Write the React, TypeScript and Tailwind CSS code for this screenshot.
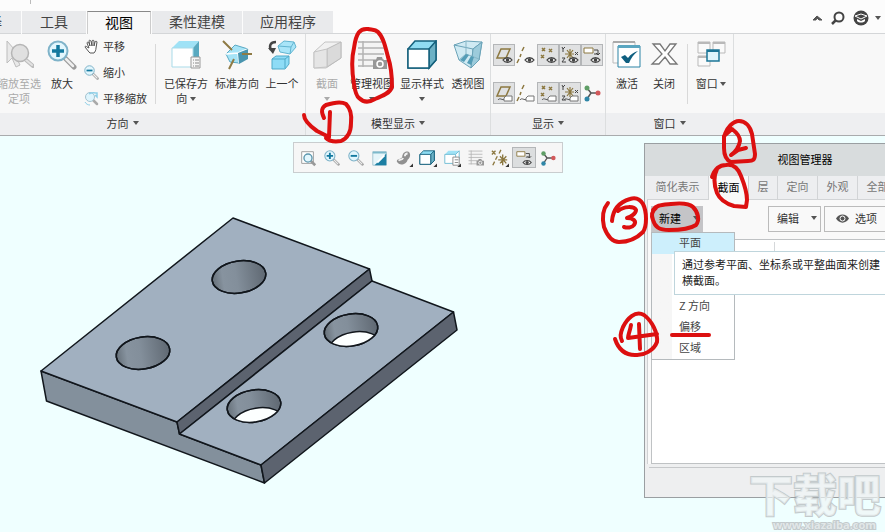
import type { ReactNode } from 'react';

const BLUE = '#1c7fa3';
const GOLD = '#8c7840';

function Svg({ size, box = size, children, className = '' }: { size: number; box?: number; children: ReactNode; className?: string }) {
  return (
    <svg width={size} height={size} viewBox={`0 0 ${box} ${box}`} fill="none" className={`shrink-0 ${className}`} aria-hidden="true">
      {children}
    </svg>
  );
}

function Caret({ className = 'text-[#555]' }: { className?: string }) {
  return (
    <svg width="6" height="4" viewBox="0 0 6 4" className={`inline-block shrink-0 ${className}`} aria-hidden="true">
      <path d="M0 0h6L3 4z" fill="currentColor" />
    </svg>
  );
}

/* ---------- large ribbon icons ---------- */

function ZoomSelectedIcon() {
  return (
    <Svg size={30}>
      <path d="M3 1v22l5-5 4 9 4-2-4-8h5z" fill="#e9e9e9" stroke="#bdbdbd" />
      <path d="M22 20l7 6" stroke="#bcbcbc" strokeWidth="4" strokeLinecap="round" />
      <path d="M22 20l6 5" stroke="#e2e2e2" strokeWidth="2" strokeLinecap="round" />
      <circle cx="16" cy="13" r="8.500" fill="#e0e0e0" stroke="#b5b5b5" strokeWidth="1.500" />
    </Svg>
  );
}

function ZoomIcon({ size, plus }: { size: number; plus: boolean }) {
  return (
    <Svg size={size} box={30}>
      <path d="M18 18l9 9" stroke="#9a9a9a" strokeWidth="5" strokeLinecap="round" />
      <path d="M19 19l7 7" stroke="#eee" strokeWidth="2.500" strokeLinecap="round" />
      <circle cx="11" cy="11" r="9.500" fill="#e2f6fd" stroke="#7fb3c9" strokeWidth="2" />
      <path d={plus ? 'M11 5v12M5 11h12' : 'M5 11h12'} stroke="#13799f" strokeWidth="3.500" />
    </Svg>
  );
}

function HandIcon() {
  return (
    <Svg size={15} box={15}>
      <path
        d="M5 13L1 8c0-1 1-1 2 0L5 9 3 4c0-1 1-1 2 0l1 3-1-5c0-1 1-1 2 0l1 5V2c0-1 2-1 2 0v5l1-4c0-1 2-1 2 0l-1 6c0 2-1 4-2 5H6z"
        fill="#fff"
        stroke="#555"
      />
    </Svg>
  );
}

function PanZoomIcon() {
  return (
    <Svg size={15} box={15}>
      <path d="M9 9l4 4" stroke="#aaa" strokeWidth="2.500" strokeLinecap="round" />
      <circle cx="6" cy="6" r="4.500" fill="#dff5fd" stroke="#a4c3d0" />
      <path d="M5 3c3-2 6-1 8-1v4l-2-2" stroke="#8ed0e8" strokeWidth="1.500" />
      <path d="M1 11c1 2 3 3 5 3" stroke="#8ed0e8" />
    </Svg>
  );
}

function SavedViewIcon() {
  return (
    <Svg size={30}>
      <path d="M1 8l7-7h20l-6 7z" fill="#9fe2f6" />
      <path d="M22 8l6-7v20l-6 6z" fill="#58a9c0" />
      <path d="M1 8h21v19H1z" fill="#fff" stroke="#a9dbe9" />
      <path d="M20 17h9v11h-9z" fill="#f6f6f6" stroke="#999" />
      <path d="M24 20h4M24 23h4M24 26h4M22 20h1M22 23h1M22 26h1" stroke="#888" />
    </Svg>
  );
}

function StandardViewIcon() {
  return (
    <Svg size={30}>
      <path d="M4 14l9-9 13 4-9 14-9-1z" fill="#a6e4f7" stroke="#5aa9c4" />
      <path d="M4 14l12-1 10-4M16 13l1 10" stroke="#fff" strokeWidth="1.500" />
      <path d="M16 13l10-4v10l-9 5z" fill="#4a95af" />
      <path d="M1 1l9 9M20 14h10M12 19l-5 10" stroke="#8f7b45" strokeWidth="2" />
    </Svg>
  );
}

function PreviousViewIcon() {
  return (
    <Svg size={30}>
      <path d="M11 6l6-5 10 1 2 5-6 7-10-2z" fill="#a9e5f8" stroke="#62b5d1" />
      <path d="M11 6l13 1 3-5M24 7l-1 7" stroke="#62b5d1" />
      <path d="M5 19l4-3h13v8l-4 5H5z" fill="#8edcf6" stroke="#4fa9c8" />
      <path d="M5 19h13l4-3M18 19v9" stroke="#4fa9c8" />
      <path d="M9 2C3 2 2 6 4 10" stroke="#444" strokeWidth="2.500" />
      <path d="M1 8h8l-3 6z" fill="#444" />
    </Svg>
  );
}

function SectionIcon() {
  return (
    <Svg size={30}>
      <path d="M2 12L13 2h16v16L14 28H2z" fill="#f1f1f1" stroke="#c4c4c4" />
      <path d="M15 9l14-7v16l-14 9z" fill="#dadada" stroke="#bbb" />
      <path d="M2 12l13-3v18L2 28z" stroke="#c4c4c4" fill="#e5e5e5" />
    </Svg>
  );
}

function ManageViewsIcon({ size = 30 }: { size?: number }) {
  return (
    <Svg size={size} box={30}>
      <path d="M1 1h26v26H1z" fill="#f4f4f4" />
      <path d="M1 2h26M1 8h26M1 14h26M1 20h26M1 26h17M6 1v26" stroke="#b3b3b3" strokeWidth="1.500" />
      <path d="M16 20h3l1-3h5l1 3h4v9H16z" fill="#979797" />
      <circle cx="23" cy="24" r="3" fill="#999" stroke="#fff" strokeWidth="1.500" />
    </Svg>
  );
}

function ShadedCubeIcon({ size = 30 }: { size?: number }) {
  return (
    <Svg size={size} box={30}>
      <path d="M1 9l7-8h21v19l-7 8H1z" fill="#8fdcf2" stroke="#14607c" strokeWidth="1.500" />
      <path d="M22 9l7-8v19l-7 8z" fill="#6cb1c5" stroke="#14607c" strokeWidth="1.500" />
      <path d="M1 9h21v19H1z" fill="#fff" stroke="#14607c" strokeWidth="1.500" />
    </Svg>
  );
}

function PerspectiveIcon() {
  return (
    <Svg size={30}>
      <path d="M1 5l12-4 16 1-3 18-8 8L6 20z" fill="#cfeaf3" stroke="#6ba3b8" />
      <path d="M1 5l19 4 9-7M20 9l-2 19" stroke="#6ba3b8" />
      <path d="M20 9l9-7-3 18-8 8z" fill="#9ccbdb" stroke="#6ba3b8" />
      <path d="M13 1v13l-7 6M13 14l13 5" stroke="#87b6c7" />
      <path d="M7 20l6-6 3 1-5 7zM14 23l4-7 3 1-3 8z" fill="#549db7" />
    </Svg>
  );
}

function ActivateIcon() {
  return (
    <Svg size={30}>
      <path d="M1 2h22v21H1z" fill="#fafafa" stroke="#bbb" />
      <path d="M1 1h22v2H1z" fill="#aaa" />
      <path d="M6 6h22v21H6z" fill="#fff" stroke="#2b83a5" />
      <path d="M6 5h22v3H6z" fill="#5aa6c0" />
      <path d="M9 17l4-2 3 3c3-4 6-6 10-7-4 3-7 7-9 12h-3z" fill="#0f5f80" />
    </Svg>
  );
}

function CloseIcon() {
  return (
    <Svg size={30}>
      <path d="M4 4h7l5 7 5-7h6l-8 10 9 10h-7l-5-7-6 7H3l10-10z" fill="#fff" stroke="#777" strokeWidth="1.300" />
    </Svg>
  );
}

function WindowsIcon() {
  return (
    <Svg size={30}>
      <g fill="#fafafa" stroke="#b9b9b9">
        <path d="M2 2h12v11H2zM17 2h12v11H17zM2 16h12v10H2z" />
        <path d="M2 3h12M17 3h12M2 17h12" strokeWidth="2" />
      </g>
      <path d="M11 10h12v11H11z" fill="#dff5fc" stroke="#1c7596" strokeWidth="1.500" />
      <path d="M11 11h12" stroke="#1c7596" strokeWidth="2" />
    </Svg>
  );
}

/* ---------- datum display icons, drawn on a 20px grid ---------- */

function Eye() {
  return (
    <g>
      <path d="M9 15c2-3 7-3 9 0-2 3-7 3-9 0z" fill="#fff" stroke="#444" strokeWidth="1.300" />
      <circle cx="13.500" cy="15" r="1.800" fill="#444" />
    </g>
  );
}

function Tag() {
  return (
    <g>
      <path d="M4 17c2-3 4 1 7-1" stroke="#555" />
      <path d="M10 15l2-2h6v5h-8z" fill="#fff" stroke="#777" />
    </g>
  );
}

function Molecule() {
  return (
    <g>
      <path d="M5 5l4 5 7 0M9 10l-4 6" stroke="#555" strokeWidth="1.500" />
      <circle cx="5" cy="5" r="2.500" fill="#5f9e66" />
      <circle cx="16" cy="10" r="2.500" fill="#d2595b" />
      <circle cx="5" cy="16" r="2.500" fill="#2f86a7" />
    </g>
  );
}

const planeShape = <path d="M7 4h9l-4 9H3z" stroke={GOLD} strokeWidth="1.500" />;
const axisShape = <path d="M8 2L6 6M5 9l-1 3M3 14l-2 4" stroke={GOLD} strokeWidth="1.500" />;
const pointShape = <path d="M4 3l3 3M7 3L4 6M11 4l3 3M14 4l-3 3M3 10l3 3M6 10l-3 3" stroke={GOLD} strokeWidth="1.500" />;
const csysShape = (
  <g>
    <path d="M10 4v10M5 9h9M7 5l6 8M13 5l-6 8" stroke={GOLD} strokeWidth="1.200" />
    <path d="M2 2l1 2 2-2M3 4v3M15 7l3 3M18 7l-3 3M2 13h3l-3 4h4" stroke="#444" />
  </g>
);
const noteShape = (
  <g>
    <path d="M2 3h9v5H2z" fill="#fff" stroke={GOLD} />
    <path d="M12 5h4v5M14 8l2 2 2-2M12 9h4" stroke="#444" />
  </g>
);

const datumRows = [
  [
    { label: '平面显示', on: true, art: <>{planeShape}<Eye /></> },
    { label: '轴显示', on: false, art: <>{axisShape}<Eye /></> },
    { label: '点显示', on: true, art: <>{pointShape}<Eye /></> },
    { label: '坐标系显示', on: true, art: <>{csysShape}<Eye /></> },
    { label: '注释显示', on: true, art: <>{noteShape}<Eye /></> },
  ],
  [
    { label: '平面标记显示', on: true, art: <>{planeShape}<Tag /></> },
    { label: '轴标记显示', on: false, art: <>{axisShape}<Tag /></> },
    { label: '点标记显示', on: true, art: <>{pointShape}<Tag /></> },
    { label: '坐标系标记显示', on: true, art: <>{csysShape}<Tag /></> },
    { label: '旋转中心', on: false, art: <Molecule /> },
  ],
];

const corner = <path d="M20 16v4h-4z" fill="#333" />;

const viewTools = [
  {
    label: '重新调整',
    art: (
      <>
        <path d="M3 3h13v13H3z" fill="#fff" stroke="#999" />
        <path d="M13 13l5 5" stroke="#999" strokeWidth="3" />
        <circle cx="10" cy="10" r="4.500" fill="#e2f6fd" stroke="#5c96ad" strokeWidth="1.500" />
      </>
    ),
  },
  { label: '放大', icon: <ZoomIcon size={16} plus /> },
  { label: '缩小', icon: <ZoomIcon size={16} plus={false} /> },
  {
    label: '重画',
    art: (
      <>
        <path d="M2 3h15v15H2z" fill="#e5f5fa" stroke="#9fc3cf" />
        <path d="M17 5v13H4z" fill={BLUE} />
        <path d="M2 3h15v2H2z" fill="#7db9cb" />
        <path d="M15 7l-8 8" stroke="#fff" strokeWidth="2" />
      </>
    ),
  },
  {
    label: '渲染选项',
    art: (
      <>
        <path d="M2 14c0-4 5-2 6-5 0-4 3-7 7-6 3 2 2 7-1 9-1 5-9 8-12 2z" fill="#909090" />
        <path d="M4 13c2-2 4 0 5-3M11 8c0-2 1-3 3-3" stroke="#f2f2f2" strokeWidth="2" />
        {corner}
      </>
    ),
  },
  {
    label: '显示样式',
    art: (
      <>
        <path d="M1 6l4-4h12v11l-4 4H1z" fill="#8fdcf2" stroke="#14607c" />
        <path d="M13 6l4-4v11l-4 4z" fill="#6cb1c5" stroke="#14607c" />
        <path d="M1 6h12v11H1z" fill="#fff" stroke="#14607c" />
        {corner}
      </>
    ),
  },
  {
    label: '已保存方向',
    art: (
      <>
        <path d="M2 6l4-4h12l-4 4z" fill="#9fe2f6" />
        <path d="M2 6h12v10H2zM14 6l4-4v10" fill="#fff" stroke="#6bbad2" />
        <path d="M11 9h7v9h-7z" fill="#fff" stroke="#888" />
        <path d="M13 12h4M13 15h4" stroke="#888" />
        {corner}
      </>
    ),
  },
  { label: '视图管理器', icon: <ManageViewsIcon size={16} /> },
  {
    label: '基准显示过滤器',
    art: (
      <>
        <path d="M1 2l4 4M5 2L1 6M11 1L9 5M7 8l-2 4M4 14l-2 4M13 6v12M8 12h10M10 8l7 8M17 8l-7 8" stroke={GOLD} strokeWidth="1.500" />
        {corner}
      </>
    ),
  },
  { label: '注释显示', on: true, art: <>{noteShape}<Eye /></> },
  { label: '旋转中心', art: <Molecule /> },
];

/* ---------- ribbon ---------- */

const tabs = [
  { label: '工具', width: 'w-16' },
  { label: '视图', width: 'w-16', active: true },
  { label: '柔性建模', width: 'w-[90px]' },
  { label: '应用程序', width: 'w-[90px]' },
];

type BigButtonProps = { icon: ReactNode; label: ReactNode; width: string; caret?: boolean; disabled?: boolean };

function BigButton({ icon, label, width, caret, disabled }: BigButtonProps) {
  return (
    <button
      type="button"
      disabled={disabled}
      className={`flex shrink-0 flex-col items-center whitespace-nowrap pt-[2px] leading-[15px] ${width} ${disabled ? 'text-[#aaa]' : 'text-[#333]'}`}
    >
      {icon}
      <span className="mt-[6px]">{label}</span>
      {caret && <Caret className={disabled ? 'mt-[6px] text-[#aaa]' : 'mt-[6px] text-[#555]'} />}
    </button>
  );
}

function SmallButton({ icon, label }: { icon: ReactNode; label: string }) {
  return (
    <button type="button" className="flex items-center gap-1 whitespace-nowrap">
      {icon}
      {label}
    </button>
  );
}

function Group({ title, width, titleClass = '', children }: { title: string; width: string; titleClass?: string; children: ReactNode }) {
  return (
    <section className={`flex shrink-0 flex-col border-r border-[#dcdedf] ${width}`}>
      <div className="flex h-[79px] items-start pt-1">{children}</div>
      <button type="button" className={`flex h-[22px] items-center justify-center gap-1 bg-[#eeeff1] pb-[2px] text-[#333] ${titleClass}`}>
        {title}
        <Caret />
      </button>
    </section>
  );
}

function Divider() {
  return <div className="mx-[3px] mt-[6px] h-[60px] w-px shrink-0 bg-[#d9d9d9]" />;
}

function Ribbon() {
  return (
    <header className="border-b border-[#a9abad] bg-[#fcfcfc]">
      <div className="h-[10px] pl-[30px]">
        <div className="h-1 w-px bg-[#bbb]" />
      </div>
      <div className="flex">
        <nav className="flex shrink-0 items-end gap-px text-sm">
          <button type="button" className="-ml-3 flex h-[23px] w-[33px] items-center border-b border-[#d4d6d8] bg-[#e9eaec] pb-[2px] leading-none text-[#444]">
            择
          </button>
          {tabs.map((tab) => (
            <button
              key={tab.label}
              type="button"
              className={`flex h-[23px] items-center justify-center pb-[2px] leading-none ${tab.width} ${
                tab.active ? 'border border-b-0 border-t-[#888] border-x-[#ccc] bg-[#f8f8f8] text-black' : 'border-b border-[#d4d6d8] bg-[#e9eaec] text-[#444]'
              }`}
            >
              {tab.label}
            </button>
          ))}
        </nav>
        <div className="flex flex-1 items-center justify-end gap-2 border-b border-[#d4d6d8] pr-1 pb-[7px]">
          <button type="button" aria-label="最小化功能区">
            <svg width="11" height="7" viewBox="0 0 11 7" aria-hidden="true">
              <path d="M1 5l4-4 5 4H7L5 3 4 5z" fill="#555" stroke="#555" />
            </svg>
          </button>
          <button type="button" aria-label="搜索">
            <Svg size={14}>
              <circle cx="8" cy="6" r="4.500" stroke="#444" strokeWidth="2" />
              <path d="M5 9l-4 4" stroke="#444" strokeWidth="2.500" />
            </Svg>
          </button>
          <button type="button" aria-label="学习中心" className="flex items-center gap-[6px]">
            <Svg size={16}>
              <circle cx="8" cy="8" r="7.500" fill="#444" />
              <path d="M2 6l6-2 6 2-6 3z" fill="#444" stroke="#fff" />
              <path d="M4 9v2c2 2 6 2 8 0V9l-4 2z" fill="#fff" />
            </Svg>
            <Caret />
          </button>
        </div>
      </div>

      <div className="flex bg-[#f8f8f8] text-[11px]">
        <Group title="方向" width="w-[306px]" titleClass="pr-[60px]">
          <div className="-ml-1 flex">
            <BigButton icon={<ZoomSelectedIcon />} label={<>缩放至选<br />定项</>} width="w-[46px]" disabled />
            <BigButton icon={<ZoomIcon size={30} plus />} label="放大" width="w-10" />
            <div className="ml-[2px] flex w-[68px] flex-col gap-[10px] text-[#333] leading-4">
              <SmallButton icon={<HandIcon />} label="平移" />
              <SmallButton icon={<ZoomIcon size={15} plus={false} />} label="缩小" />
              <SmallButton icon={<PanZoomIcon />} label="平移缩放" />
            </div>
            <Divider />
            <BigButton
              icon={<SavedViewIcon />}
              label={<>已保存方<br />向 <Caret className="mb-[2px] text-[#555]" /></>}
              width="w-[54px]"
            />
            <BigButton icon={<StandardViewIcon />} label="标准方向" width="w-12" />
            <BigButton icon={<PreviousViewIcon />} label="上一个" width="w-[42px]" />
          </div>
        </Group>
        <Group title="模型显示" width="w-[185px]">
          <BigButton icon={<SectionIcon />} label="截面" width="w-[42px]" caret disabled />
          <BigButton icon={<ManageViewsIcon />} label="管理视图" width="w-12" caret />
          <BigButton icon={<ShadedCubeIcon />} label="显示样式" width="w-[52px]" caret />
          <BigButton icon={<PerspectiveIcon />} label="透视图" width="w-10" />
        </Group>
        <Group title="显示" width="w-[115px]">
          <div className="mt-[6px] ml-[2px] flex flex-col gap-4">
            {datumRows.map((row, i) => (
              <div key={i} className="flex">
                {row.map((item) => (
                  <button
                    key={item.label}
                    type="button"
                    aria-label={item.label}
                    aria-pressed={item.on}
                    className={`flex size-[22px] items-center justify-center border ${item.on ? 'border-[#b4b6b8] bg-[#e0e1e2]' : 'border-transparent'}`}
                  >
                    <Svg size={20}>{item.art}</Svg>
                  </button>
                ))}
              </div>
            ))}
          </div>
        </Group>
        <Group title="窗口" width="w-32">
          <BigButton icon={<ActivateIcon />} label="激活" width="w-[42px]" />
          <BigButton icon={<CloseIcon />} label="关闭" width="w-8" />
          <div className="w-1" />
          <Divider />
          <BigButton icon={<WindowsIcon />} label={<>窗口 <Caret className="mb-[2px] text-[#555]" /></>} width="w-10" />
        </Group>
        <div className="flex flex-1 flex-col">
          <div className="h-[79px]" />
          <div className="h-[22px] bg-[#eeeff1]" />
        </div>
      </div>
    </header>
  );
}

/* ---------- graphics area ---------- */

function ViewToolbar() {
  return (
    <div role="toolbar" aria-label="图形工具栏" className="flex w-fit items-center border border-[#c9cdcf] bg-[#f6f6f6] px-[2px] py-1">
      {viewTools.map((tool) => (
        <button
          key={tool.label}
          type="button"
          aria-label={tool.label}
          className={`flex h-[21px] w-6 items-center justify-center border ${tool.on ? 'border-[#b4b6b8] bg-[#dcdedf]' : 'border-transparent'}`}
        >
          {tool.icon ?? <Svg size={18} box={20}>{tool.art}</Svg>}
        </button>
      ))}
    </div>
  );
}

const holes = [
  { x: 199, y: 60, through: false },
  { x: 103, y: 136, through: false },
  { x: 311, y: 113, through: true },
  { x: 214, y: 189, through: true },
];

function PartModel() {
  return (
    <svg width="420" height="268" viewBox="0 0 420 268" fill="none" aria-label="零件模型">
      <defs>
        <linearGradient id="bore">
          <stop offset="0" stopColor="#667079" />
          <stop offset="0.200" stopColor="#87939f" />
          <stop offset="0.450" stopColor="#838f9b" />
          <stop offset="1" stopColor="#5f6872" />
        </linearGradient>
        <clipPath id="rim">
          <ellipse rx="27.500" ry="16" transform="rotate(-9)" />
        </clipPath>
      </defs>
      <g stroke="#11161c" strokeWidth="1.500" strokeLinejoin="round">
        <path d="M1 154l136 51 2.500 12 81.500 31 3.500 18L6.500 184z" fill="#83909c" />
        <path d="M193 1L329.500 52 137 205 1 154z" fill="#a1b0c0" />
        <path d="M329.500 52l2.500 12L139.500 217 137 205z" fill="#5c636f" />
        <path d="M332 64l81.500 31L221 248 139.500 217z" fill="#a1b0c0" />
        <path d="M413.500 95l3.500 18L224.500 266 221 248z" fill="#5c636f" />
      </g>
      {holes.map((hole, i) => (
        <g key={i} transform={`translate(${hole.x} ${hole.y})`} stroke="#11161c" strokeWidth="1.500">
          <ellipse rx="27" ry="16" transform="rotate(-9)" fill="url(#bore)" />
          {hole.through && (
            <g clipPath="url(#rim)">
              <ellipse cx="4" cy="18" rx="27" ry="16" transform="rotate(-9 4 18)" fill="#fcffff" />
            </g>
          )}
          <ellipse rx="27" ry="16" transform="rotate(-9)" />
        </g>
      ))}
    </svg>
  );
}

/* ---------- view manager ---------- */

const managerTabs = [
  { label: '简化表示', width: 'w-[62px]' },
  { label: '截面', width: 'w-10', active: true },
  { label: '层', width: 'w-[29px]' },
  { label: '定向', width: 'w-10' },
  { label: '外观', width: 'w-10' },
  { label: '全部', width: 'w-10' },
];

function NewSectionMenu() {
  return (
    <div role="menu" className="absolute top-full left-0 w-[84px] border border-[#b5babd] bg-linear-to-r from-[#f6f6f6] from-25% to-white to-25% text-[#444]">
      <button type="button" role="menuitem" className="block h-[21px] w-full bg-[#cdeffc] pb-[2px] pl-[27px] text-left">平面</button>
      <div role="tooltip" className="absolute top-[18px] left-[22px] w-[234px] border border-[#bfd5dc] bg-white px-[7px] pt-1 pb-[6px] text-[#222] leading-4">
        通过参考平面、坐标系或平整曲面来创建<br />横截面。
      </div>
      <div className="mt-[42px] flex flex-col">
        {['Z 方向', '偏移', '区域'].map((item) => (
          <button key={item} type="button" role="menuitem" className="h-[21px] pb-[2px] pl-[27px] text-left">{item}</button>
        ))}
      </div>
    </div>
  );
}

function ViewManager() {
  return (
    <div role="dialog" aria-label="视图管理器" className="absolute top-[7px] left-[644px] w-[322px] border border-[#9a9fa2] bg-[#eeeff0] text-[11px]">
      <h2 className="flex h-8 items-center justify-center bg-[#d8dcdd] pb-[2px] text-black">视图管理器</h2>
      <div className="flex pl-[2px]">
        {managerTabs.map((tab) => (
          <button
            key={tab.label}
            type="button"
            className={`h-6 shrink-0 border-r pb-[2px] ${tab.width} ${tab.active ? 'border-[#ccc] bg-[#f9f9f9] text-black' : 'border-b border-[#d2d4d6] bg-[#edeef0] text-[#777]'}`}
          >
            {tab.label}
          </button>
        ))}
      </div>
      <div className="ml-[2px] border-l border-[#cfd1d3] bg-[#f9f9f9] pt-[6px] pl-[3px]">
        <div className="flex text-[#333]">
          <div className="relative">
            <button type="button" className="flex h-[26px] w-[52px] items-center gap-3 bg-[#c4c4c7] pb-[2px] pl-2 text-black">
              新建
              <Caret />
            </button>
            <NewSectionMenu />
          </div>
          <button type="button" className="ml-[65px] flex h-[26px] w-[53px] items-center justify-between border border-[#bbb] pr-[3px] pb-[2px] pl-2">
            编辑
            <Caret />
          </button>
          <button type="button" className="ml-[3px] flex h-[26px] w-[66px] items-center gap-[6px] border border-[#bbb] pb-[2px] pl-[11px]">
            <svg width="13" height="9" viewBox="0 0 13 9" aria-hidden="true">
              <path d="M0 4.500C3-1 10-1 13 4.500 10 10 3 10 0 4.500z" fill="#555" />
              <circle cx="6.500" cy="4.500" r="2.500" fill="#555" stroke="#fff" />
            </svg>
            选项
          </button>
        </div>
        <div className="mt-[7px] flex h-[225px] border border-[#bfc2c4] bg-white">
          <div className="mt-[2px] h-[10px] w-[123px] border-r border-[#d5d8da]" />
        </div>
      </div>
      <div className="mt-[3px] ml-1 h-[30px] border-t border-[#c6c8ca]" />
    </div>
  );
}

/* ---------- markup drawn over the screen ---------- */

const strokes = [
  'M368 29C360 28 356 33 354 48 351 60 352 72 354 84 355 91 356 96 359 98 364 103 370 102 375 99 383 96 390 93 392 87 392 75 391 66 388 57 385 45 383 37 378 32 375 29 371 30 368 29',
  'M304 115C304 121 310 126 317 131L329 137 330 112M324 118C321 112 321 108 326 105 332 103 341 101 346 104 350 108 352 114 351 123 351 132 348 138 341 141 335 142 330 142 326 138',
  'M725 134C727 128 733 121 739 121 745 121 750 126 752 134L755 154C755 160 753 161 748 161L731 162C726 160 724 154 724 148L724 136 732 129C736 132 740 136 740 141 739 147 735 152 731 155L738 150 746 148',
  'M712 177C714 171 718 165 726 165 733 164 738 168 741 176 745 186 747 192 747 200L746 207 734 206C727 204 720 200 717 193 714 185 713 177 717 169',
  'M608 203C602 210 602 218 604 227 607 235 612 242 619 242 627 242 636 239 643 232 647 226 647 212 643 204 640 199 636 197 630 199 620 202 613 208 612 221M618 211C624 206 634 206 636 210 636 214 630 217 627 218 633 218 637 221 634 225 632 228 627 228 624 227',
  'M653 210C656 205 661 205 671 204 681 203 689 203 693 207 698 212 700 220 696 225 690 229 679 230 669 230 659 230 655 227 653 220 651 215 652 211 656 208',
  'M615 339C618 348 624 355 635 355 644 356 654 350 657 342 658 333 652 321 644 315 635 310 627 319 623 327 620 334 620 337 622 341M631 325C630 331 628 335 628 338L657 334M639 324L640 349',
  'M672 335L709 335',
];

function Markup() {
  return (
    <svg width="885" height="532" viewBox="0 0 885 532" className="pointer-events-none absolute top-0 left-0" aria-hidden="true">
      <g fill="none" stroke="#dc1010" strokeWidth="4" strokeLinecap="round" strokeLinejoin="round">
        {strokes.map((d) => <path key={d} d={d} />)}
      </g>
    </svg>
  );
}

function Watermark() {
  return (
    <svg
      width="137"
      height="62"
      viewBox="0 0 137 62"
      className="pointer-events-none absolute right-0 bottom-0 font-['Noto_Sans_CJK_SC',sans-serif] font-black"
    >
      <g fill="#f0f5f6" fillOpacity="0.700" stroke="#c3cacc" strokeWidth="2" paintOrder="stroke">
        <text x="1" y="42" fontSize="44">下载吧</text>
        <text x="25" y="59" fontSize="11" className="font-['Open_Sans',sans-serif] font-bold">www.xiazaiba.com</text>
      </g>
    </svg>
  );
}

export default function App() {
  return (
    <div className="relative flex min-h-screen flex-col overflow-hidden bg-[#efffff] font-['Noto_Sans_CJK_SC','Liberation_Sans',sans-serif]">
      <Ribbon />
      <main className="relative flex-1 overflow-hidden">
        <div className="pt-[6px] pl-[293px]">
          <ViewToolbar />
        </div>
        <div className="pt-11 pl-10">
          <PartModel />
        </div>
        <ViewManager />
        <Watermark />
      </main>
      <Markup />
    </div>
  );
}
